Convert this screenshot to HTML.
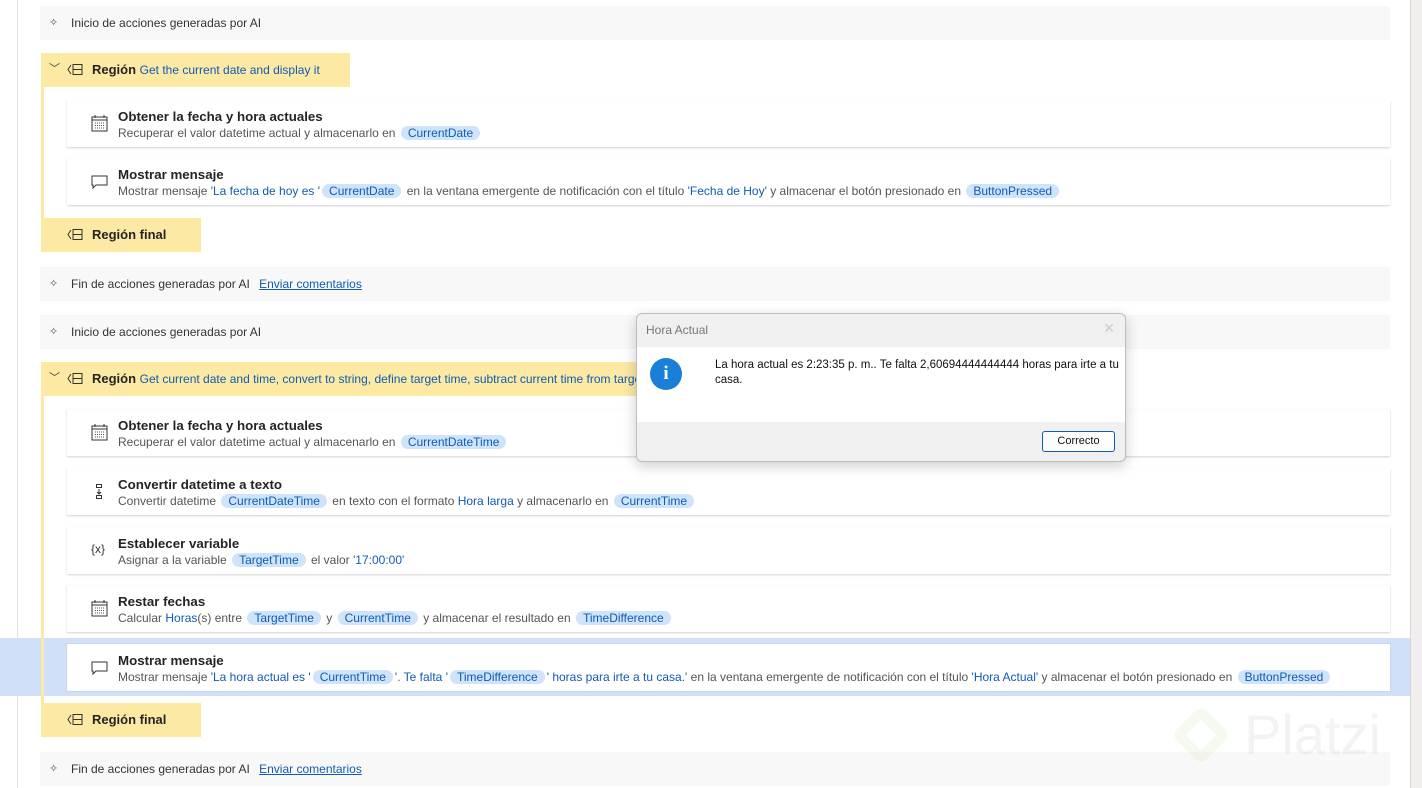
<!DOCTYPE html>
<html><head><meta charset="utf-8"><style>
*{margin:0;padding:0;box-sizing:border-box}
body{width:1422px;height:788px;overflow:hidden;background:#fff;font-family:"Liberation Sans",sans-serif;color:#242424;position:relative}
.abs{position:absolute}
.ai{position:absolute;left:40px;width:1350px;height:34px;background:#f8f8f8;font-size:12px;line-height:34px;padding-left:31px;color:#333}
.ai .st{position:absolute;left:9px;top:0;font-size:11px;color:#555}
.ai a{color:#0f5bb5;text-decoration:underline;margin-left:6px}
.rh{position:absolute;left:41px;height:34px;background:#fce9a4;line-height:34px;font-size:13px}
.rh .chev{position:absolute;left:8px;top:-1px;font-size:11px;color:#444}
.rh .ic{position:absolute;left:26px;top:11px;width:16px;height:11px}
.rh b{position:absolute;left:51px;font-weight:bold;color:#242424}
.rh span.l{color:#0f5bb5;font-size:12px}
.vl{position:absolute;left:41px;width:3px;background:#fce9a4}
.card{position:absolute;left:67px;width:1323px;height:47px;background:#fff;box-shadow:0 1px 2px rgba(0,0,0,.18)}
.card .t{position:absolute;left:51px;top:9px;font-size:13.3px;font-weight:bold;color:#242424}
.card .s{position:absolute;left:51px;top:26px;font-size:12px;color:#555;white-space:nowrap}
.card .i{position:absolute;left:24px;top:15px;width:17px;height:17px}
.s .v{color:#0f5bb5}
.p{background:#cfe3fb;color:#0f5bb5;border-radius:8px;padding:0 7px;margin:0 2px}
</style></head><body>
<div class="abs" style="left:17px;top:0;width:1px;height:788px;background:#e0e0e0"></div>
<div class="abs" style="left:1410px;top:0;width:12px;height:788px;background:#f1efee;border-left:1px solid #d8d8d8"></div>
<div class="abs" style="left:0;top:638px;width:1410px;height:58px;background:#cfe0f8"></div>

<div class="ai" style="top:6px"><span class="st">✧</span>Inicio de acciones generadas por AI</div>

<div class="rh" style="top:53px;width:309px"><span class="chev">﹀</span><svg class="ic" viewBox="0 0 16 11"><path d="M4 1L1 5.5L4 10M6 .5h9v10H6zM6 5.5h9" fill="none" stroke="#333" stroke-width="1"/></svg><b>Región <span class="l" style="font-weight:normal">Get the current date and display it</span></b></div>
<div class="vl" style="top:87px;height:140px"></div>

<div class="card" style="top:100px"><svg class="i" viewBox="0 0 17 17"><rect x="1" y="2" width="15" height="14" fill="none" stroke="#333"/><path d="M1 5h15M4 0v3M13 0v3" stroke="#333"/><path d="M4 8h9M4 10.5h9M4 13h9" stroke="#555" stroke-dasharray="1 1"/></svg><div class="t">Obtener la fecha y hora actuales</div><div class="s">Recuperar el valor datetime actual y almacenarlo en <span class="p">CurrentDate</span></div></div>
<div class="card" style="top:158px"><svg class="i" viewBox="0 0 17 17"><path d="M1 3h15v9H5l-3 3v-3H1z" fill="none" stroke="#333"/></svg><div class="t">Mostrar mensaje</div><div class="s">Mostrar mensaje <span class="v">'La fecha de hoy es '</span><span class="p">CurrentDate</span> en la ventana emergente de notificación con el título <span class="v">'Fecha de Hoy'</span> y almacenar el botón presionado en <span class="p">ButtonPressed</span></div></div>

<div class="rh" style="top:218px;width:160px"><svg class="ic" viewBox="0 0 16 11"><path d="M4 1L1 5.5L4 10M6 .5h9v10H6zM6 5.5h9" fill="none" stroke="#333"/></svg><b>Región final</b></div>

<div class="ai" style="top:267px"><span class="st">✧</span>Fin de acciones generadas por AI <a>Enviar comentarios</a></div>
<div class="ai" style="top:315px"><span class="st">✧</span>Inicio de acciones generadas por AI</div>

<div class="rh" style="top:362px;width:600px;overflow:hidden;white-space:nowrap"><span class="chev">﹀</span><svg class="ic" viewBox="0 0 16 11"><path d="M4 1L1 5.5L4 10M6 .5h9v10H6zM6 5.5h9" fill="none" stroke="#333"/></svg><b>Región <span class="l" style="font-weight:normal">Get current date and time, convert to string, define target time, subtract current time from target</span></b></div>
<div class="vl" style="top:396px;height:320px"></div>

<div class="card" style="top:409px"><svg class="i" viewBox="0 0 17 17"><rect x="1" y="2" width="15" height="14" fill="none" stroke="#333"/><path d="M1 5h15M4 0v3M13 0v3" stroke="#333"/><path d="M4 8h9M4 10.5h9M4 13h9" stroke="#555" stroke-dasharray="1 1"/></svg><div class="t">Obtener la fecha y hora actuales</div><div class="s">Recuperar el valor datetime actual y almacenarlo en <span class="p">CurrentDateTime</span></div></div>
<div class="card" style="top:468px"><svg class="i" viewBox="0 0 17 17"><path d="M5.5 1.5h5v3h-5zM5.5 12.5h5v3h-5zM8 6v5M6 9l2 2 2-2" fill="none" stroke="#333"/></svg><div class="t">Convertir datetime a texto</div><div class="s">Convertir datetime <span class="p">CurrentDateTime</span> en texto con el formato <span class="v">Hora larga</span> y almacenarlo en <span class="p">CurrentTime</span></div></div>
<div class="card" style="top:527px"><div class="i" style="font-size:12px;color:#333;top:15px;left:24px">{x}</div><div class="t">Establecer variable</div><div class="s">Asignar a la variable <span class="p">TargetTime</span> el valor <span class="v">'17:00:00'</span></div></div>
<div class="card" style="top:585px"><svg class="i" viewBox="0 0 17 17"><rect x="1" y="2" width="15" height="14" fill="none" stroke="#333"/><path d="M1 5h15M4 0v3M13 0v3" stroke="#333"/><path d="M4 8h9M4 10.5h9M4 13h9" stroke="#555" stroke-dasharray="1 1"/></svg><div class="t">Restar fechas</div><div class="s">Calcular <span class="v">Horas</span>(s) entre <span class="p">TargetTime</span> y <span class="p">CurrentTime</span> y almacenar el resultado en <span class="p">TimeDifference</span></div></div>
<div class="card" style="top:644px;box-shadow:0 0 0 1px #c5d8f0"><svg class="i" viewBox="0 0 17 17"><path d="M1 3h15v9H5l-3 3v-3H1z" fill="none" stroke="#333"/></svg><div class="t">Mostrar mensaje</div><div class="s">Mostrar mensaje <span class="v">'La hora actual es '</span><span class="p">CurrentTime</span><span class="v">'. Te falta '</span><span class="p">TimeDifference</span><span class="v">' horas para irte a tu casa.'</span> en la ventana emergente de notificación con el título <span class="v">'Hora Actual'</span> y almacenar el botón presionado en <span class="p">ButtonPressed</span></div></div>

<div class="rh" style="top:703px;width:160px"><svg class="ic" viewBox="0 0 16 11"><path d="M4 1L1 5.5L4 10M6 .5h9v10H6zM6 5.5h9" fill="none" stroke="#333"/></svg><b>Región final</b></div>
<div class="ai" style="top:752px"><span class="st">✧</span>Fin de acciones generadas por AI <a>Enviar comentarios</a></div>

<div class="abs" style="left:1180px;top:700px;font-size:56px;line-height:70px;color:rgba(200,200,200,.22);font-family:'Liberation Sans',sans-serif"><span style="display:inline-block;width:42px;height:42px;border:10px solid rgba(205,230,185,.22);border-radius:8px;transform:rotate(45deg);margin-right:22px;vertical-align:-2px"></span>Platzi</div>

<div class="abs" style="left:636px;top:313px;width:490px;height:149px;background:#f0f0f0;border:1px solid #bdbdbd;border-radius:6px;box-shadow:0 4px 14px rgba(0,0,0,.2);overflow:hidden">
 <div class="abs" style="left:9px;top:9px;font-size:12px;color:#777">Hora Actual</div>
 <div class="abs" style="right:10px;top:6px;font-size:14px;color:#ccc">✕</div>
 <div class="abs" style="left:0;top:33px;width:488px;height:75px;background:#fff"></div>
 <div class="abs" style="left:13px;top:44px;width:32px;height:32px;border-radius:50%;background:#1a7fd6;color:#fff;text-align:center;font:bold 19px/32px 'Liberation Serif',serif">i</div>
 <div class="abs" style="left:78px;top:44px;width:405px;font-size:11.5px;line-height:15px;color:#111">La hora actual es 2:23:35 p. m.. Te falta 2,60694444444444 horas para irte a tu casa.</div>
 <div class="abs" style="left:405px;top:117px;width:73px;height:21px;border:1px solid #0f5bb5;border-radius:3px;background:#fdfdfd;font-size:11px;line-height:19px;text-align:center;color:#111">Correcto</div>
</div>
</body></html>
